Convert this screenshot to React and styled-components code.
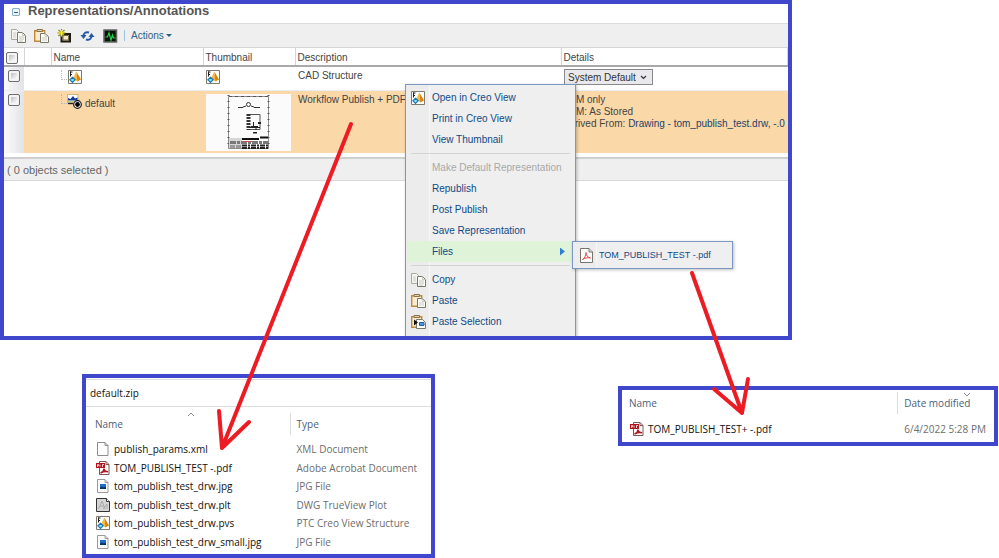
import React from "react";
import styled, { createGlobalStyle, css } from "styled-components";

const FRAME = "#3f48cc";
const LINK = "#0f4a86";

const GlobalStyle = createGlobalStyle`
  * { box-sizing: border-box; }
  body { margin: 0; background: #fff; font-family: "Liberation Sans", Arial, sans-serif; }
  table { border-collapse: collapse; border-spacing: 0; }
  td, th { padding: 0; text-align: left; font-weight: 400; }
  button { border: 0; background: none; padding: 0; margin: 0; font: inherit; color: inherit; }
  svg { display: block; flex: none; }
  a { text-decoration: none; }
`;

const Page = styled.div`
  position: relative;
`;

/* ---------- icons ---------- */

const CopyIcon = () => (
  <svg width="15" height="14" viewBox="0 0 15 14" fill="none">
    <path d="M.5.5h5l2 2v8h-7z" fill="#f4f4f0" stroke="#a9a99c" />
    <path d="M2 4h3M2 6h3M2 8h3" stroke="#cfcfc4" />
    <path d="M6.500 3.500h5l3 3v7h-8z" fill="#fdfdfa" stroke="#77776a" />
    <path d="M11.500 3.500v3h3M8 8h5M8 10h5M8 12h4" stroke="#c6c6ba" />
  </svg>
);

const PasteIcon = () => (
  <svg width="15" height="14" viewBox="0 0 15 14" fill="none">
    <path d="M.7 1.700h10v10.500h-10z" fill="#f9ecd0" stroke="#c08a3c" strokeWidth="1.400" />
    <path d="M3 .5h5.500v2h-5.500z" fill="#d9d2c2" stroke="#8d7448" />
    <path d="M6.500 4.500h4.500l3.500 3v6h-8z" fill="#fdfdfa" stroke="#77776a" />
    <path d="M11 4.500v3h3.500M8 9h5M8 11h5" stroke="#cdcdc2" />
  </svg>
);

const PasteSelectionIcon = () => (
  <svg width="15" height="14" viewBox="0 0 15 14" fill="none">
    <path d="M.7 1.700h10v10.500h-10z" fill="#f9ecd0" stroke="#c08a3c" strokeWidth="1.400" />
    <path d="M3 .5h5.500v2h-5.500z" fill="#d9d2c2" stroke="#8d7448" />
    <path d="M5.500 4.500h6l3 3v6h-9z" fill="#fdfdfa" stroke="#77776a" />
    <path d="M3 4.500l4 3-4 3z" fill="#111" />
    <path d="M8.500 7.500h4.500v3h-4.500z" fill="#4d9be0" stroke="#2a5c92" />
  </svg>
);

const NewIcon = () => (
  <svg width="15" height="14" viewBox="0 0 15 14" fill="none">
    <path d="M4.500 5h8.500v7.500h-8.500z" fill="#ddd6b0" stroke="#1c1a12" strokeWidth="2" />
    <path d="M6 6.500h5.500v4.500h-5.500z" fill="#f3ecd0" stroke="#756c44" />
    <path d="M4.500 0v8M.5 4h8M1.500 1l6 6M7.500 1l-6 6" stroke="#8a8200" strokeWidth="1.200" />
    <path d="M4.500 1v6M1.500 4h6M2.500 2l4 4M6.500 2l-4 4" stroke="#f6f01e" />
  </svg>
);

const RefreshIcon = () => (
  <svg width="15" height="14" viewBox="0 0 15 14" fill="none">
    <path d="M3.500 7C3.500 4 6 2.500 9 3.500" stroke="#2458a6" strokeWidth="2" />
    <path d="M.5 6h6L3.500 10z" fill="#2458a6" />
    <path d="M11.500 7C11.500 10 9 11.500 6 10.500" stroke="#2458a6" strokeWidth="2" />
    <path d="M14.500 8h-6l3-4z" fill="#2458a6" />
  </svg>
);

const MonitorIcon = () => (
  <svg width="15" height="14" viewBox="0 0 15 14" fill="none">
    <path d="M1 1h12.500v12H1z" fill="#07150a" stroke="#666" strokeWidth="1.600" />
    <path d="M2.500 8h2l1.500-4 2 7 1.500-5 1 3h2" stroke="#1fd14a" strokeWidth="1.200" />
  </svg>
);

const CreoIcon = () => (
  <svg width="14" height="14" viewBox="0 0 14 14" fill="none">
    <path d="M.5.500h13v13H.500z" fill="#fff" stroke="#80796e" />
    <path d="M2.500 1.500v5M2 2h2.500M2 4.500h2" stroke="#222" />
    <path d="M8.300 1.500L5 8.500l4.300 3z" fill="#f9b93a" />
    <path d="M8.300 1.500l4.700 8-3.700 2z" fill="#d9820c" />
    <path d="M4.500 7.300l2.600 2.500-2.600 2.600L1.900 9.800z" fill="#8fdcf5" stroke="#1679b5" strokeWidth="1.200" />
  </svg>
);

const RepresentationIcon = () => (
  <svg width="15" height="15" viewBox="0 0 15 15" fill="none">
    <path d="M.5.500h10.500v8.500H.5z" fill="#fff" stroke="#c9b77a" />
    <path d="M1 6.500V4L3.500 5 6 2l2 2.500 2.500-1v3z" fill="#123e91" />
    <path d="M1 7h9.500v1.800H1z" fill="#c8c887" />
    <path d="M1 9.500h5" stroke="#222" strokeWidth="1.400" />
    <circle cx="10.500" cy="10.500" r="3.800" fill="#fff" stroke="#111" strokeWidth="1.200" />
    <circle cx="10.500" cy="10.500" r="2.400" fill="#000" />
  </svg>
);

const PdfPageIcon = () => (
  <svg width="13" height="15" viewBox="0 0 13 15" fill="none">
    <path d="M.5.500h8.500l3.500 3.500v10.500H.500z" fill="#fff" stroke="#76766c" />
    <path d="M9 .500v3.500h3.500" fill="#ddd" stroke="#76766c" />
    <path d="M2.500 11.500c2-.8 3.500-4 3.500-7 0 3 2 5 4.500 5.500-3-.8-5.500 0-8 1.500z" stroke="#e8484a" />
  </svg>
);

const AcrobatIcon = () => (
  <svg width="14" height="14" viewBox="0 0 14 14" fill="none">
    <path d="M3.500.500h6.500l3 3v10H3.500z" fill="#fff" stroke="#7d5555" />
    <path d="M10 .5v3h3" stroke="#7d5555" />
    <path d="M0 2h9v5H0z" fill="#b3141c" />
    <path d="M1.500 6v-2.500h1v1.300h-1M4 3.500v2.200M6.500 6V3.500h1.500" stroke="#fff" strokeWidth=".8" />
    <path d="M4.500 12c2-.8 3.500-2.500 3.500-4.500 0 2 1.500 3 4 3.300-2.500-.6-5 0-7.500 1.200z" stroke="#b3141c" strokeWidth="1.400" />
  </svg>
);

const BlankFileIcon = () => (
  <svg width="14" height="14" viewBox="0 0 14 14" fill="none">
    <path d="M1.500.500h7.500l3 3v10H1.500z" fill="#fdfdfd" stroke="#8c8c8c" />
    <path d="M9 .500v3h3" stroke="#8c8c8c" />
  </svg>
);

const ImageFileIcon = () => (
  <svg width="14" height="14" viewBox="0 0 14 14" fill="none">
    <path d="M1.500.500h7.500l3 3v10H1.500z" fill="#fdfdfd" stroke="#9a9a9a" />
    <path d="M9 .500v3h3" stroke="#9a9a9a" />
    <path d="M4 5h6v5H4z" fill="#1c6fc4" />
    <path d="M4 10V8.500l2-1 1.500 1L10 7.500V10z" fill="#0b3566" />
  </svg>
);

const PlotIcon = () => (
  <svg width="14" height="14" viewBox="0 0 14 14" fill="none">
    <path d="M.5.500h10l3 3v10H.500z" fill="#d5d5d5" stroke="#333" />
    <path d="M2.500 11L6 3l3 8M4 8h4M7 11l4-5v5" stroke="#a8a8a8" />
    <path d="M10.500.500v3h3" fill="#fff" stroke="#333" />
  </svg>
);

const DrawingThumbnail = () => (
  <svg width="85" height="57" viewBox="0 0 85 57" fill="none">
    <path d="M0 0h85v57H0z" fill="#fbfbfb" />
    <path d="M22.500 2.500h40v52h-40z" stroke="#8b8b8b" />
    <path d="M22.500 1v54M62.500 1v54" stroke="#555" strokeDasharray="1 5" strokeWidth="2" />
    <path d="M23 2.500h40" stroke="#555" strokeDasharray="3 3" />
    <path d="M32 13.500h5M48 13.500h6M37 13l3-1M45 12l3 1" stroke="#333" />
    <circle cx="42.500" cy="10.500" r="2" stroke="#333" />
    <path d="M41 20.500h13v15H41" stroke="#555" />
    <path d="M42.500 20v16" stroke="#333" strokeWidth="4" strokeDasharray="2 1" />
    <path d="M47.500 28v5M44 33.500h10M50 33v3" stroke="#222" />
    <path d="M45 32h7v2h-7zM52 28h3v2h-3zM47 38h4v1.500h-4z" fill="#222" />
    <path d="M23 44h13v10H23z" fill="#d6d6d6" />
    <path d="M36 45h17M54 43.500h8" stroke="#111" strokeWidth="2" />
    <path d="M24 48.500h38" stroke="#777" strokeWidth="3" strokeDasharray="6 1 3 1" />
    <path d="M36 47.500h10" stroke="#b55" />
    <path d="M24 52.500h11" stroke="#999" strokeWidth="3" strokeDasharray="5 1" />
    <path d="M36 51.500h26M36 54h26" stroke="#222" strokeWidth="2" strokeDasharray="5 1 2 1" />
  </svg>
);

const Branch = styled.span`
  align-self: flex-start;
  width: 6px;
  height: 10px;
  border-left: 1px dotted #b9b9b9;
  border-bottom: 1px dotted #b9b9b9;
`;

/* ---------- representations panel ---------- */

const MainPanel = styled.section`
  position: relative;
  margin-right: 207px;
  border: 4px solid ${FRAME};
  overflow: hidden;
  color: #444;
  font-size: 10px;
`;

const TitleBar = styled.header`
  display: flex;
  align-items: flex-start;
  gap: 8px;
  height: 19px;
  padding-left: 8px;
`;

const Collapse = styled.button`
  display: flex;
  align-items: center;
  justify-content: center;
  width: 8px;
  height: 8px;
  margin-top: 4px;
  border: 1px solid #8db0c9;
  border-radius: 1px;
  background: #eef5fa;

  &::before { content: ""; width: 4px; height: 1px; background: #22648f; }
`;

const Title = styled.h2`
  margin: 0;
  color: #555;
  font-size: 13px;
  line-height: 14px;
`;

const Toolbar = styled.div`
  display: flex;
  align-items: center;
  gap: 8px;
  height: 25px;
  padding-left: 7px;
  background: #efefef;
  border-top: 1px solid #ddd;
  border-bottom: 1px solid #d5d5d5;
`;

const ToolDivider = styled.span`
  width: 1px;
  height: 11px;
  margin: 0 -2px;
  background: #9cc3e0;
`;

const ActionsButton = styled.button`
  display: flex;
  align-items: center;
  gap: 2px;
  color: #2c6185;

  &::after {
    content: "";
    border: 3px solid transparent;
    border-top-color: #2c6185;
    border-bottom: 0;
  }
`;

const Grid = styled.table`
  width: 100%;
  table-layout: fixed;
  line-height: 12px;
`;

const Col = styled.col`
  width: ${(p) => p.$w}px;
`;

const HeadCell = styled.th`
  height: 18px;
  padding: 2px 0 0 2px;
  border-right: 1px solid #d4d4d4;
  border-bottom: 2px solid #a9a9a9;
`;

const Row = styled.tr`
  height: ${(p) => p.$h}px;
  border-top: 1px solid #ececec;
  background: ${(p) => (p.$selected ? "#fbd8a7" : "#fff")};
`;

const Cell = styled.td`
  padding: 3px 0 0 ${(p) => p.$indent || 3}px;
  vertical-align: top;
`;

const PickCell = styled.td`
  padding: 3px 0 0 4px;
  vertical-align: top;
  background: linear-gradient(90deg, #fbfbfb, #e2e3e8);
`;

const CheckBox = styled.input`
  appearance: none;
  display: block;
  width: 12px;
  height: 12px;
  margin: 0;
  border: 1px solid #6f6f6f;
  border-radius: 2px;
  background: linear-gradient(135deg, #a9a9a9, #fff 80%);
  box-shadow: inset 0 0 0 2px #f4f4f4;
`;

const NameLine = styled.div`
  display: flex;
  align-items: center;
  gap: ${(p) => p.$gap}px;
`;

const NameText = styled.span`
  padding: 4px 0 0 3px;
`;

const StructureSelect = styled.select`
  display: block;
  width: 89px;
  height: 16px;
  margin-top: -1px;
  padding: 0 3px;
  appearance: none;
  border: 1px solid #888;
  border-radius: 0;
  color: #333;
  font: 10px "Liberation Sans", Arial, sans-serif;
  background: #e9e9ed
    url("data:image/svg+xml,%3Csvg xmlns='http://www.w3.org/2000/svg' width='7' height='5'%3E%3Cpath d='M1 1l2.500 2.500L6 1' fill='none' stroke='%23333' stroke-width='1.200'/%3E%3C/svg%3E")
    no-repeat right 5px center;
`;

const DetailLine = styled.div`
  white-space: nowrap;
  a { color: #1d4268; }
`;

const Status = styled.footer`
  display: flex;
  align-items: center;
  height: 24px;
  margin-top: 4px;
  padding: 0 3px;
  border-top: 2px solid #cfcfcf;
  border-bottom: 1px solid #d9d9d9;
  background: #efefef;
  color: #666;
  font-size: 11px;
`;

const Blank = styled.div`
  height: 155px;
`;

/* ---------- context menu ---------- */

const menuSurface = css`
  position: absolute;
  border: 1px solid #7c97c4;
  color: ${LINK};
  font-size: 10px;
  box-shadow: 1px 1px 3px rgba(0, 0, 0, 0.25);
  background: linear-gradient(90deg, #ececec 22px, #dcdcdc 22px, #fff 23px, #efefef 24px);
`;

const Menu = styled.div`
  ${menuSurface}
  top: 80px;
  left: 401px;
  width: 171px;
  height: 270px;
  padding: 2px 1px;
`;

const SubMenu = styled.div`
  ${menuSurface}
  top: 237px;
  left: 568px;
  width: 161px;
  padding: 2px 1px;
`;

const MenuButton = styled.button`
  display: grid;
  grid-template-columns: 25px 1fr auto;
  align-items: center;
  width: 100%;
  height: 21px;
  padding-right: 9px;
  text-align: left;
  white-space: nowrap;
  background: ${(p) => (p.$active ? "#dff3d8" : "transparent")};
  &:disabled { color: #a8a8a8; }
`;

const FileButton = styled(MenuButton)`
  height: 22px;
  font-size: 9px;
`;

const IconSlot = styled.span`
  padding-left: ${(p) => p.$pad || 4}px;
`;

const Separator = styled.hr`
  height: 1px;
  margin: 3px 4px;
  border: 0;
  background: #d4d4d4;
`;

const SubArrow = styled.span`
  width: 5px;
  height: 8px;
  background: #2f7fd0;
  clip-path: polygon(0 0, 100% 50%, 0 100%);
`;

const MenuItem = ({ icon, label, disabled, active }) => (
  <MenuButton type="button" disabled={disabled} $active={active}>
    <IconSlot>{icon}</IconSlot>
    <span>{label}</span>
    {active && <SubArrow />}
  </MenuButton>
);

/* ---------- file explorer panels ---------- */

const Explorers = styled.div`
  display: grid;
  grid-template-columns: 353fr 380fr;
  column-gap: 183px;
  align-items: start;
  margin-top: 34px;
  padding: 0 1px 0 82px;
`;

const Explorer = styled.section`
  border: 4px solid ${FRAME};
  margin-top: ${(p) => p.$top || 0}px;
  padding-bottom: ${(p) => p.$bottom || 0}px;
  color: #111;
  font-family: "Open Sans", "Noto Sans", sans-serif;
  font-size: 10px;
  line-height: 14px;
`;

const AddressBar = styled.div`
  margin-top: 1px;
  padding: 6px 4px;
  border-top: 1px solid #ddd;
  border-bottom: 1px solid #ddd;
`;

const FileTable = styled.table`
  width: 100%;
  table-layout: fixed;
  white-space: nowrap;
`;

const NameHead = styled.th`
  width: ${(p) => p.$w}%;
  height: ${(p) => p.$h}px;
  padding-left: ${(p) => p.$pad}px;
  color: #4c607a;
`;

const SideHead = styled.th`
  color: #4c607a;
`;

const HeadLabel = styled.div`
  display: flex;
  align-items: center;
  position: relative;
  height: 22px;
  padding-left: 6px;
  border-left: 1px solid #ddd;
`;

const SortMark = styled.svg`
  position: absolute;
  top: ${(p) => p.$top}px;
  left: ${(p) => p.$left}px;
`;

const NamedHead = styled.div`
  position: relative;
`;

const FileRow = styled.tr`
  height: ${(p) => p.$h}px;
`;

const FileName = styled.div`
  display: flex;
  align-items: center;
  gap: 4px;
  padding-left: ${(p) => p.$pad}px;
`;

const Meta = styled.td`
  padding-left: 7px;
  color: #6d6d6d;
`;

const FILES = [
  ["publish_params.xml", "XML Document", BlankFileIcon],
  ["TOM_PUBLISH_TEST -.pdf", "Adobe Acrobat Document", AcrobatIcon],
  ["tom_publish_test_drw.jpg", "JPG File", ImageFileIcon],
  ["tom_publish_test_drw.plt", "DWG TrueView Plot", PlotIcon],
  ["tom_publish_test_drw.pvs", "PTC Creo View Structure", CreoIcon],
  ["tom_publish_test_drw_small.jpg", "JPG File", ImageFileIcon],
];

const Arrows = styled.svg`
  position: absolute;
  top: 0;
  left: 0;
  pointer-events: none;
`;

export default function App() {
  return (
    <Page>
      <GlobalStyle />
      <MainPanel>
        <TitleBar>
          <Collapse type="button" aria-label="Collapse" />
          <Title>Representations/Annotations</Title>
        </TitleBar>
        <Toolbar>
          <button type="button" aria-label="Copy"><CopyIcon /></button>
          <button type="button" aria-label="Paste"><PasteIcon /></button>
          <button type="button" aria-label="New representation"><NewIcon /></button>
          <button type="button" aria-label="Refresh"><RefreshIcon /></button>
          <button type="button" aria-label="Monitor"><MonitorIcon /></button>
          <ToolDivider />
          <ActionsButton type="button">Actions</ActionsButton>
        </Toolbar>
        <Grid>
          <colgroup>
            <Col $w={20} /><Col $w={27} /><Col $w={152} /><Col $w={92} /><Col $w={266} /><col />
          </colgroup>
          <thead>
            <tr>
              <HeadCell><CheckBox type="checkbox" aria-label="Select all" /></HeadCell>
              <HeadCell />
              <HeadCell>Name</HeadCell>
              <HeadCell>Thumbnail</HeadCell>
              <HeadCell>Description</HeadCell>
              <HeadCell>Details</HeadCell>
            </tr>
          </thead>
          <tbody>
            <Row $h={24}>
              <PickCell><CheckBox type="checkbox" aria-label="Select CAD Structure" /></PickCell>
              <Cell />
              <Cell $indent={10}><NameLine $gap={1}><Branch /><CreoIcon /></NameLine></Cell>
              <Cell><CreoIcon /></Cell>
              <Cell>CAD Structure</Cell>
              <Cell>
                <StructureSelect aria-label="Structure"><option>System Default</option></StructureSelect>
              </Cell>
            </Row>
            <Row $h={63} $selected>
              <PickCell><CheckBox type="checkbox" aria-label="Select default" /></PickCell>
              <Cell />
              <Cell $indent={10}>
                <NameLine $gap={0}><Branch /><RepresentationIcon /><NameText>default</NameText></NameLine>
              </Cell>
              <Cell><DrawingThumbnail /></Cell>
              <Cell>Workflow Publish + PDF (</Cell>
              <Cell $indent={1}>
                <DetailLine>PDM only</DetailLine>
                <DetailLine>PDM: As Stored</DetailLine>
                <DetailLine>Derived From: <a href="#drawing">Drawing - tom_publish_test.drw, -.0</a></DetailLine>
              </Cell>
            </Row>
          </tbody>
        </Grid>
        <Status>( 0 objects selected )</Status>
        <Blank />
        <Menu>
          <MenuItem icon={<CreoIcon />} label="Open in Creo View" />
          <MenuItem label="Print in Creo View" />
          <MenuItem label="View Thumbnail" />
          <Separator />
          <MenuItem label="Make Default Representation" disabled />
          <MenuItem label="Republish" />
          <MenuItem label="Post Publish" />
          <MenuItem label="Save Representation" />
          <MenuItem label="Files" active />
          <Separator />
          <MenuItem icon={<CopyIcon />} label="Copy" />
          <MenuItem icon={<PasteIcon />} label="Paste" />
          <MenuItem icon={<PasteSelectionIcon />} label="Paste Selection" />
        </Menu>
        <SubMenu>
          <FileButton type="button">
            <IconSlot $pad={6}><PdfPageIcon /></IconSlot>
            <span>TOM_PUBLISH_TEST -.pdf</span>
          </FileButton>
        </SubMenu>
      </MainPanel>

      <Explorers>
        <Explorer $bottom={3}>
          <AddressBar>default.zip</AddressBar>
          <FileTable>
            <thead>
              <tr>
                <NameHead $w={59} $h={33} $pad={9}>
                  <NamedHead>
                    Name
                    <SortMark $top={-5} $left={92} width="8" height="5" viewBox="0 0 8 5" fill="none">
                      <path d="M1 4l3-3 3 3" stroke="#888" />
                    </SortMark>
                  </NamedHead>
                </NameHead>
                <SideHead><HeadLabel>Type</HeadLabel></SideHead>
              </tr>
            </thead>
            <tbody>
              {FILES.map(([name, type, Icon], i) => (
                <FileRow key={name} $h={i % 2 ? 19 : 18}>
                  <td><FileName $pad={10}><Icon />{name}</FileName></td>
                  <Meta>{type}</Meta>
                </FileRow>
              ))}
            </tbody>
          </FileTable>
        </Explorer>

        <Explorer $top={12}>
          <FileTable>
            <thead>
              <tr>
                <NameHead $w={74} $h={26} $pad={7}>Name</NameHead>
                <SideHead>
                  <HeadLabel>
                    Date modified
                    <SortMark $top={0} $left={65} width="8" height="5" viewBox="0 0 8 5" fill="none">
                      <path d="M1 1l3 3 3-3" stroke="#888" />
                    </SortMark>
                  </HeadLabel>
                </SideHead>
              </tr>
            </thead>
            <tbody>
              <FileRow $h={26}>
                <td><FileName $pad={8}><AcrobatIcon />TOM_PUBLISH_TEST+ -.pdf</FileName></td>
                <Meta>6/4/2022 5:28 PM</Meta>
              </FileRow>
            </tbody>
          </FileTable>
        </Explorer>
      </Explorers>

      <Arrows width="999" height="558" viewBox="0 0 999 558" fill="none" stroke="#ed1c24" strokeWidth="4" strokeLinecap="round" strokeLinejoin="round">
        <path d="M351 124L222 448M219 411l3 37 27-26" />
        <path d="M692 273L742 413M714 389l28 24 6-34" />
      </Arrows>
    </Page>
  );
}
